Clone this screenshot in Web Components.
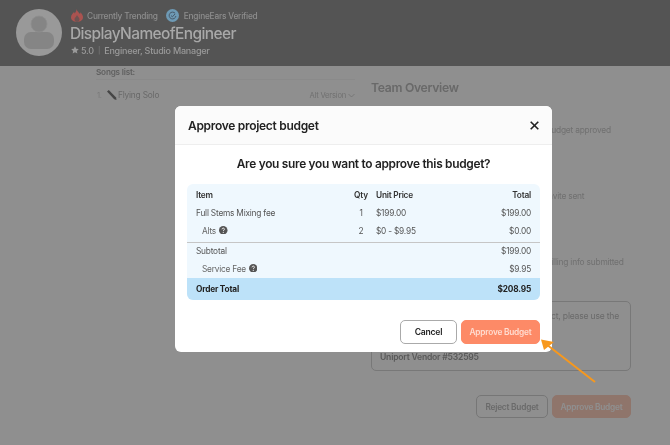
<!DOCTYPE html>
<html><head><meta charset="utf-8">
<style>
html,body{margin:0;padding:0;background:#fff}
body{width:670px;height:445px;overflow:hidden;font-family:Inter,"Noto Sans",sans-serif}
</style></head><body>
<ee-app></ee-app>
<script>
function def(name,css,html){
  customElements.define(name,class extends HTMLElement{
    constructor(){super();const r=this.attachShadow({mode:'open'});r.innerHTML='<style>:host,*{letter-spacing:-.025em}'+css+'</style>'+html;}
  });
}
def('ee-avatar',`:host{display:block;width:46px;height:47px;flex:none}svg{display:block}`,
`<svg width="46" height="47" viewBox="0 0 46 47"><ellipse cx="23" cy="23.500" rx="23" ry="23.500" fill="#999"/><rect x="8" y="23" width="30" height="17" rx="7" fill="#858585"/><circle cx="23" cy="15" r="8" fill="#858585" stroke="#8e8e8e" stroke-width=".8"/></svg>`);
def('ee-header',`
:host{display:flex;position:relative;z-index:1;height:66px;box-sizing:border-box;padding:9px 0 0 16px;gap:8px;background:#545454;color:#aaa}
.info{display:flex;flex-direction:column}
.top{display:flex;align-items:center;height:13px;font-size:8.300px;font-weight:500;color:#8e8e8e;margin-left:1px}
.top svg{flex:none}
.name{font-size:15.500px;line-height:22px;font-weight:500;color:#a8a8a8;margin-top:1px;letter-spacing:-.04em}
.sub{display:flex;align-items:center;font-size:9px;font-weight:500;color:#9a9a9a;height:12px;margin-top:-1px;margin-left:1px}
.sep{margin:0 4px 0 4px;font-size:7px;color:#777}
`,`<ee-avatar></ee-avatar><div class="info">
<div class="top"><svg width="12" height="13" viewBox="0 0 12 13" style="margin:0 4px 0 0"><path d="M5.500 0c.6 2.200 2 3 3.500 5 .3-.6.4-1.100.4-1.800C11 4.800 12 6.500 12 8.300 12 11 9.500 13 6 13S0 11 0 8.300C0 5.500 2 4.500 3 3c.3.600.5 1 .9 1.400C4.600 3 5.700 1.800 5.500 0z" fill="#aa5350"/><path d="M6 6c.3 1.300 2.500 2.400 2.500 4.300C8.500 11.800 7.400 13 6 13s-2.500-1.200-2.500-2.700C3.500 8.500 5.500 7.800 6 6z" fill="#6e5352"/></svg>Currently Trending<svg width="13" height="13" viewBox="0 0 13 13" style="margin:0 5px 0 8px"><circle cx="6.500" cy="6.500" r="6.500" fill="#6e9ab5"/><path d="M9.200 4.400A3.400 3.400 0 1 0 9.900 7" fill="none" stroke="#47596a" stroke-width="1"/><path d="M5 6.600l1.400 1.200L9 5" fill="none" stroke="#47596a" stroke-width="1"/></svg>EngineEars Verified</div>
<div class="name">DisplayNameofEngineer</div>
<div class="sub"><svg width="8" height="8" viewBox="0 0 24 24" style="margin-right:2px"><path d="M12 1l3.400 7.300 8 1-5.900 5.500 1.600 8L12 18.800 4.900 22.800l1.600-8L.6 9.300l8-1z" fill="#9a9a9a"/></svg>5.0<span class="sep">|</span>Engineer, Studio Manager</div>
</div>`);
def('ee-songs',`
:host{display:block;width:259px;color:#aaa;font-size:8.200px}
.h{font-weight:600;height:13px;line-height:13px;border-bottom:1px solid #f7f7f7}
.row{display:flex;align-items:center;margin-top:9px;height:12px;font-size:8.350px;color:#bbb}
.n{width:11px;padding-left:1px;box-sizing:border-box;color:#d8d8d8;font-size:7.500px}
svg{margin-right:2px}
.alt{margin-left:auto;font-size:7.550px;color:#c8c8c8;display:flex;align-items:center;gap:2px}
`,`<div class="h">Songs list:</div>
<div class="row"><span class="n">1.</span><svg width="10" height="10" viewBox="0 0 10 10"><path d="M1.800 0 0 1.600 7.200 9.300 9.500 10 9.100 7.400z" fill="#7c7c7c"/></svg><span style="margin-left:-1px">Flying Solo</span><span class="alt">Alt Version<svg width="7" height="5" viewBox="0 0 7 5" style="margin:0"><path d="M.5 1l3 3 3-3" fill="none" stroke="#c8c8c8" stroke-width=".8"/></svg></span></div>`);
def('ee-btn',`
:host{display:inline-flex;align-items:center;justify-content:center;box-sizing:border-box;border-radius:5px;font-weight:600;font-size:var(--fs,8.300px);height:var(--h,24px);border:1px solid var(--bd,#aaa);background:var(--bg,#fff);color:var(--fg,#222);width:var(--w,auto)}
`,`<slot></slot>`);
def('ee-team',`
:host{display:block;width:260px;color:#bbb}
h2{font-size:12.200px;font-weight:600;margin:0;line-height:18px;color:#bbb}
.r{height:66px;font-size:8.400px;color:#c8c8c8;padding-left:175px;box-sizing:border-box;line-height:12px;white-space:nowrap}
.note{border:1px solid #d6d6d6;border-radius:5px;height:70px;box-sizing:border-box;padding:8px 11px 7px 8px;font-size:8.600px;color:#bdbdbd;display:flex;flex-direction:column;justify-content:space-between}
.note .t{text-align:right;line-height:12px;white-space:nowrap}
.note .v{font-weight:600;line-height:12px;color:#a0a0a0}
.btns{display:flex;justify-content:flex-end;gap:4px;margin-top:24px}
`,`<h2>Team Overview</h2>
<div style="height:27px"></div>
<div class="r">Budget approved</div><div class="r">Invite sent</div><div class="r" style="height:45px">Billing info submitted</div>
<div class="note"><span class="t">To pay for this project, please use the</span><span class="v">Uniport Vendor #532595</span></div>
<div class="btns"><ee-btn style="--w:72px;--h:23px;--bd:#d3d3d3;--bg:transparent;--fg:#bdbdbd">Reject Budget</ee-btn><ee-btn style="--w:79px;--h:23px;--bd:#ffd0bf;--bg:#ffd0bf;--fg:#ffffff">Approve Budget</ee-btn></div>`);
def('ee-help',`:host{display:inline-block;width:8.500px;height:8.500px;margin-left:3px;position:relative;top:-1px}svg{display:block}`,
`<svg width="8.500" height="8.500" viewBox="0 0 9 9"><circle cx="4.500" cy="4.500" r="4.500" fill="#555"/><path d="M3.200 3.500c0-.8.6-1.300 1.300-1.300s1.300.5 1.300 1.200c0 .9-1.300 1-1.300 1.900" fill="none" stroke="#fff" stroke-width=".9"/><circle cx="4.500" cy="6.700" r=".6" fill="#fff"/></svg>`);
def('ee-budget',`
:host{display:block;background:#eff8fe;border-radius:6px;overflow:hidden;color:#555;font-size:8.300px}
.g{display:grid;grid-template-columns:1fr 30px 155px;padding:0 9px}
.g>div{display:flex;align-items:center;height:18px;white-space:nowrap}
.q{justify-content:center}
.p{justify-content:flex-start;position:relative}
.t{position:absolute;right:0}
.b{font-weight:600;color:#333}
.in{padding-left:6px;color:#666}
.total{background:#bde2f9;height:22px;display:flex;align-items:center;justify-content:space-between;padding:0 9px;font-weight:700;color:#222}
`,`<div class="g" style="padding-top:2px">
<div class="b">Item</div><div class="q b">Qty</div><div class="p b">Unit Price<span class="t">Total</span></div>
<div>Full Stems Mixing fee</div><div class="q">1</div><div class="p">$199.00<span class="t">$199.00</span></div>
<div class="in">Alts<ee-help></ee-help></div><div class="q">2</div><div class="p">$0 - $9.95<span class="t">$0.00</span></div>
</div>
<div style="height:1px;background:#c6c6c6;margin-top:2px;margin-bottom:-1px"></div>
<div class="g">
<div>Subtotal</div><div></div><div class="p"><span class="t">$199.00</span></div>
<div class="in">Service Fee<ee-help></ee-help></div><div></div><div class="p"><span class="t">$9.95</span></div>
</div>
<div class="total"><span>Order Total</span><span>$208.95</span></div>`);
def('ee-modal',`
:host{position:absolute;z-index:2;left:175px;top:106px;width:377px;height:246px;background:#fff;border-radius:6px;color:#222;display:flex;flex-direction:column}
header{height:39px;box-sizing:border-box;border-bottom:1px solid #eee;display:flex;align-items:center;justify-content:space-between;padding:0 13px;background:#fbfbfb;border-radius:6px 6px 0 0}
h1{font-size:12px;font-weight:600;margin:0;color:#222}
h3{font-size:11.900px;font-weight:600;margin:0;text-align:center;line-height:18px;padding-top:10px;color:#222}
ee-budget{margin:11px 12px 0 12px}
.acts{display:flex;justify-content:flex-end;gap:4px;padding:20px 12px 0 0}
svg{display:block}
`,`<header><h1>Approve project budget</h1><svg width="9" height="9" viewBox="0 0 9 9"><path d="M.7.7l7.600 7.600M8.300.7.700 8.300" stroke="#222" stroke-width="1.600" fill="none"/></svg></header>
<h3>Are you sure you want to approve this budget?</h3>
<ee-budget></ee-budget>
<div class="acts"><ee-btn style="--w:57px;--bd:#aaa;--fg:#222;--fs:8.600px">Cancel</ee-btn><ee-btn style="--w:79px;--bd:#fd8a67;--bg:#fd8a67;--fg:#ffdcd0">Approve Budget</ee-btn></div>`);
def('ee-app',`
:host{display:block;position:relative;width:670px;height:445px;overflow:hidden;background:#fff;filter:blur(.3px)}
main{display:flex;padding:0 0 0 96px;gap:16px;box-sizing:border-box}
ee-team{margin-top:13px}
.overlay{position:absolute;inset:0;background:rgba(0,0,0,.44)}
.arrow{position:absolute;z-index:3;left:535px;top:333px}
`,`<ee-header></ee-header>
<main><ee-songs></ee-songs><ee-team></ee-team></main>
<div class="overlay"></div>
<ee-modal></ee-modal>
<svg class="arrow" width="66" height="54" viewBox="0 0 66 54"><path d="M60 49 11 11" stroke="#f7981d" stroke-width="2" fill="none"/><path d="M6 6.500l13 2.500-10 8z" fill="#f7981d"/></svg>`);
</script>
</body></html>
